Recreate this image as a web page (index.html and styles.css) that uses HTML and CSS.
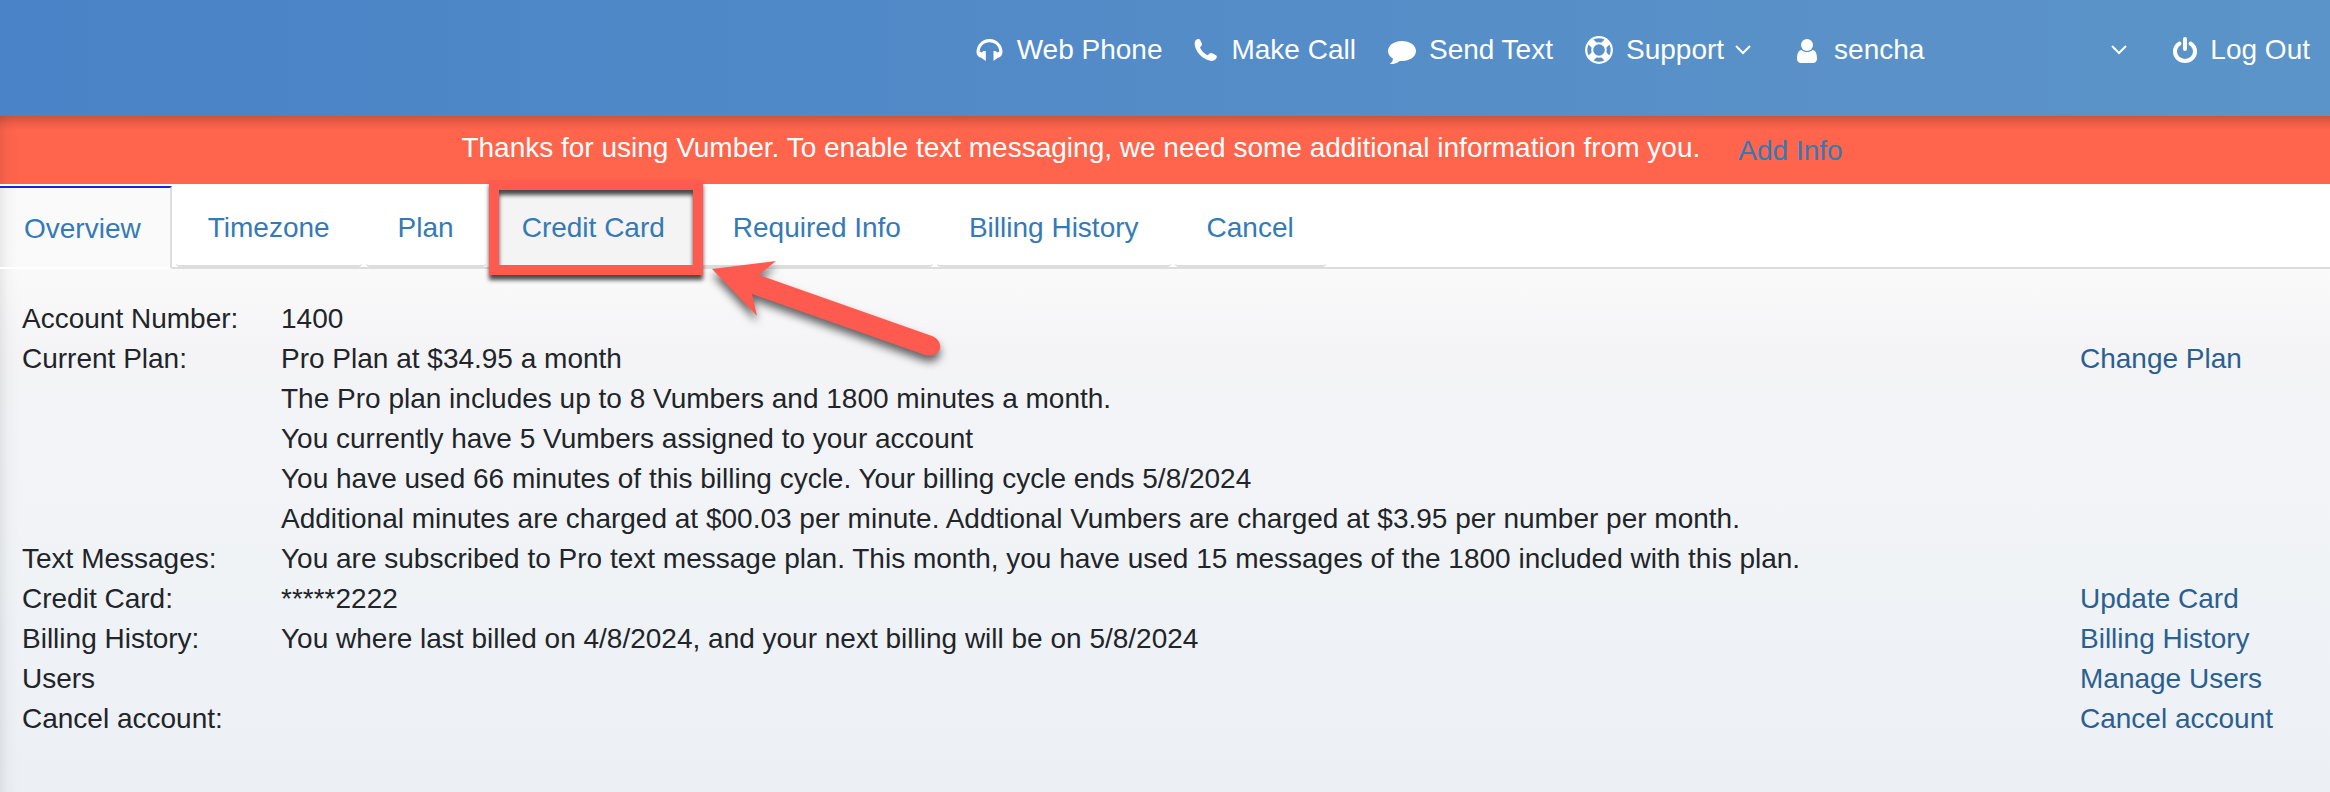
FILE: index.html
```html
<!DOCTYPE html>
<html lang="en">
<head>
    <meta charset="UTF-8">
    <meta name="viewport" content="width=device-width, initial-scale=1.0">
    <title>Vumber - Account Overview</title>
    <link rel="stylesheet" href="styles.css">
</head>
<body>
    <header class="topbar">
        <nav class="topnav">
            <a href="#phone">
                <svg class="icon" width="28" height="28" viewBox="0 0 28 28" fill="#fff">
                    <path d="M0.500 16C0.500 9 6 3 13.500 3S26.500 9 26.500 16C26.500 18 25.500 20 23.500 21.200L21.800 21.800L17.500 25V15H19.500L21.300 16.600L23.300 15.500C23 10 19 6.200 13.500 6.200S4 10 3.700 15.500L5.700 16.600L7.500 15H9.800V25L5.200 21.800L3.500 21.200C1.500 20 .5 18 .5 16Z"/>
                </svg>
                <span>Web Phone</span>
            </a>
            <a href="#call">
                <svg class="icon" width="24" height="28" viewBox="0 0 24 28" fill="#fff">
                    <path d="M2.500 3.600C4.500 2.500 5.800 3 6.400 4.500L7.800 7.500C8.200 8.800 7.800 9.700 6 11.500C7.500 15 10.500 18 13.800 19.300C15.600 17 16.700 16.500 18.200 17.200L22 19.200C23.300 20.200 23 21.500 21.800 23C20 25.200 17 25.500 13 23.800C7.500 21.500 3.500 17.500 1.500 12C0 8 .5 5 2.500 3.600Z"/>
                </svg>
                <span>Make Call</span>
            </a>
            <a href="#text">
                <svg class="icon" width="28" height="28" viewBox="0 0 28 28" fill="#fff">
                    <path d="M14 5C21.700 5 28 9.300 28 15S21.700 25 14 25C13.300 25 12.500 25 11.800 24.900C9.500 27 6.500 28 2.500 28C2 28 2 27.800 2.200 27.500C4 26.200 4.800 25 5 22.700C1.800 20.800 0 18 0 15C0 9.300 6.300 5 14 5Z"/>
                </svg>
                <span>Send Text</span>
            </a>
            <button type="button" class="menu-btn support">
                <svg class="icon" width="28" height="28" viewBox="0 0 28 28" fill="none" stroke="#fff">
                    <circle cx="14" cy="14" r="12.800" stroke-width="2.200"/>
                    <circle cx="14" cy="14" r="6.800" stroke-width="2"/>
                    <path d="M9.500 9.500L5.500 5.500M18.500 9.500L22.500 5.500M9.500 18.500L5.500 22.500M18.500 18.500L22.500 22.500" stroke-width="7"/>
                </svg>
                <span>Support</span>
                <svg class="chevron" width="16" height="10" viewBox="0 0 16 10" fill="none" stroke="#fff" stroke-width="2">
                    <path d="M1 1L8 8L15 1"/>
                </svg>
            </button>
            <button type="button" class="menu-btn user">
                <svg class="icon" width="20" height="28" viewBox="0 0 20 28" fill="#fff">
                    <circle cx="10" cy="9" r="6"/>
                    <path d="M4.500 14C6 15.400 8 16 10 16S14 15.400 15.500 14C18.500 14 20 18 20 22.500C20 25.300 18.500 27 16 27H4C1.500 27 0 25.300 0 22.500C0 18 1.500 14 4.500 14Z"/>
                </svg>
                <span>sencha</span>
                <svg class="chevron" width="16" height="10" viewBox="0 0 16 10" fill="none" stroke="#fff" stroke-width="2">
                    <path d="M1 1L8 8L15 1"/>
                </svg>
            </button>
            <a href="#logout">
                <svg class="icon" width="24" height="28" viewBox="0 0 24 28" fill="none" stroke="#fff" stroke-width="4" stroke-linecap="round">
                    <path d="M6.500 7.500C3.500 9.500 2 12 2 15.500C2 21 6.500 25 12 25S22 21 22 15.500C22 12 20.500 9.500 17.500 7.500M12 3V13"/>
                </svg>
                <span>Log Out</span>
            </a>
        </nav>
    </header>

    <main class="page">
        <div class="notice">
            <span>Thanks for using Vumber. To enable text messaging, we need some additional information from you.</span>
            <a href="#info">Add Info</a>
        </div>

        <ul class="tabs">
            <li class="active"><a href="#overview">Overview</a></li>
            <li><a href="#timezone">Timezone</a></li>
            <li><a href="#plan">Plan</a></li>
            <li class="marked">
                <a href="#card">Credit Card</a>
                <div class="marker"></div>
                <svg class="arrow" width="250" height="130" viewBox="0 0 250 130">
                    <path d="M12 20L76 12L59 26L232 87C246 93 241 110 225 106L52 45L57 67Z" fill="#ff5a50"/>
                </svg>
            </li>
            <li><a href="#required">Required Info</a></li>
            <li><a href="#billing">Billing History</a></li>
            <li><a href="#cancel">Cancel</a></li>
        </ul>

        <section class="overview">
            <table class="details">
                <tr>
                    <th scope="row">Account Number:</th>
                    <td>1400</td>
                    <td></td>
                </tr>
                <tr>
                    <th scope="row">Current Plan:</th>
                    <td>
                        Pro Plan at $34.95 a month<br>
                        The Pro plan includes up to 8 Vumbers and 1800 minutes a month.<br>
                        You currently have 5 Vumbers assigned to your account<br>
                        You have used 66 minutes of this billing cycle. Your billing cycle ends 5/8/2024<br>
                        Additional minutes are charged at $00.03 per minute. Addtional Vumbers are charged at $3.95 per number per month.
                    </td>
                    <td><a href="#plan">Change Plan</a></td>
                </tr>
                <tr>
                    <th scope="row">Text Messages:</th>
                    <td>You are subscribed to Pro text message plan. This month, you have used 15 messages of the 1800 included with this plan.</td>
                    <td></td>
                </tr>
                <tr>
                    <th scope="row">Credit Card:</th>
                    <td>*****2222</td>
                    <td><a href="#card">Update Card</a></td>
                </tr>
                <tr>
                    <th scope="row">Billing History:</th>
                    <td>You where last billed on 4/8/2024, and your next billing will be on 5/8/2024</td>
                    <td><a href="#billing">Billing History</a></td>
                </tr>
                <tr>
                    <th scope="row">Users</th>
                    <td></td>
                    <td><a href="#users">Manage Users</a></td>
                </tr>
                <tr>
                    <th scope="row">Cancel account:</th>
                    <td></td>
                    <td><a href="#cancel">Cancel account</a></td>
                </tr>
            </table>
        </section>
    </main>
</body>
</html>
```
FILE: styles.css
```css
:root {
    --edge: linear-gradient(to right, rgba(0, 0, 0, 0.07), rgba(0, 0, 0, 0.02) 8px, rgba(0, 0, 0, 0) 18px);
}

* {
    box-sizing: border-box;
}

body {
    margin: 0;
    min-height: 100vh;
    display: flex;
    flex-direction: column;
    font-family: "Liberation Sans", Arial, sans-serif;
    font-size: 28px;
    line-height: 40px;
    color: #212529;
}

a {
    color: #337ab7;
    text-decoration: none;
}

/* top bar */
.topbar {
    padding: 30px 20px 46px;
    background: linear-gradient(to right, #4a83c7, #5991c8 80%, #5a94c8);
}

.topnav {
    display: flex;
    justify-content: flex-end;
    gap: 32px;
}

.topnav a,
.menu-btn {
    display: flex;
    align-items: center;
    gap: 13px;
    color: #fff;
}

.menu-btn {
    padding: 0;
    border: none;
    background: none;
    font: inherit;
    cursor: pointer;
}

.support {
    margin-right: 14px;
}

.support .chevron {
    margin-left: -2px;
}

.user {
    margin-right: 14px;
}

.user .icon {
    margin-right: 4px;
}

.user .chevron {
    margin-left: 174px;
}

/* page */
.page {
    flex: 1;
    display: flex;
    flex-direction: column;
    background: #fff;
}

.notice {
    display: flex;
    justify-content: center;
    gap: 38px;
    padding: 12px 26px 16px 0;
    color: #fff;
    background: linear-gradient(rgba(0, 0, 0, 0.18), rgba(0, 0, 0, 0.07) 7px, rgba(0, 0, 0, 0) 14px), var(--edge), #ff644c;
}

.notice a {
    padding-top: 3px;
    margin-bottom: -3px;
}

/* tabs */
.tabs {
    display: flex;
    gap: 4px;
    margin: 0;
    padding: 0;
    list-style: none;
    border-bottom: 2px solid #ddd;
}

.tabs li {
    position: relative;
}

.tabs a {
    display: block;
    padding: 24px 32px 17px;
    border-bottom: 2px solid #ddd;
    border-radius: 0 0 4px 4px;
}

.tabs .active a {
    margin-top: 2px;
    margin-bottom: -2px;
    padding: 21px 29px 18px 24px;
    border-top: 2px solid #1a24e0;
    border-right: 2px solid #ddd;
    border-bottom-color: #fff;
    border-radius: 0;
    background: var(--edge), #fafafa;
}

.tabs .marked a {
    background: #f4f4f4;
}

/* callout over the credit card tab */
.marker {
    position: absolute;
    z-index: 1;
    top: -4px;
    bottom: -8px;
    left: -1px;
    right: -6px;
    border: 10px solid #ff5a50;
    filter: drop-shadow(0 5px 2px rgba(0, 0, 0, 0.7));
    pointer-events: none;
}

.arrow {
    position: absolute;
    z-index: 1;
    top: 65px;
    left: 210px;
    filter: drop-shadow(0 6px 4px rgba(0, 0, 0, 0.6));
    pointer-events: none;
}

/* account details */
.overview {
    flex: 1;
    padding: 30px 22px;
    background: var(--edge), linear-gradient(#fafafa, #f4f4f7 16%, #f0f3f6 60%, #eceff4);
}

.details {
    width: 100%;
    table-layout: fixed;
    border-collapse: collapse;
}

.details th,
.details td {
    height: 40px;
    padding: 0;
    font-weight: normal;
    text-align: left;
    vertical-align: top;
}

.details th {
    width: 259px;
}

.details td:last-child {
    width: 228px;
}

.details a {
    color: #2a6091;
}
```
